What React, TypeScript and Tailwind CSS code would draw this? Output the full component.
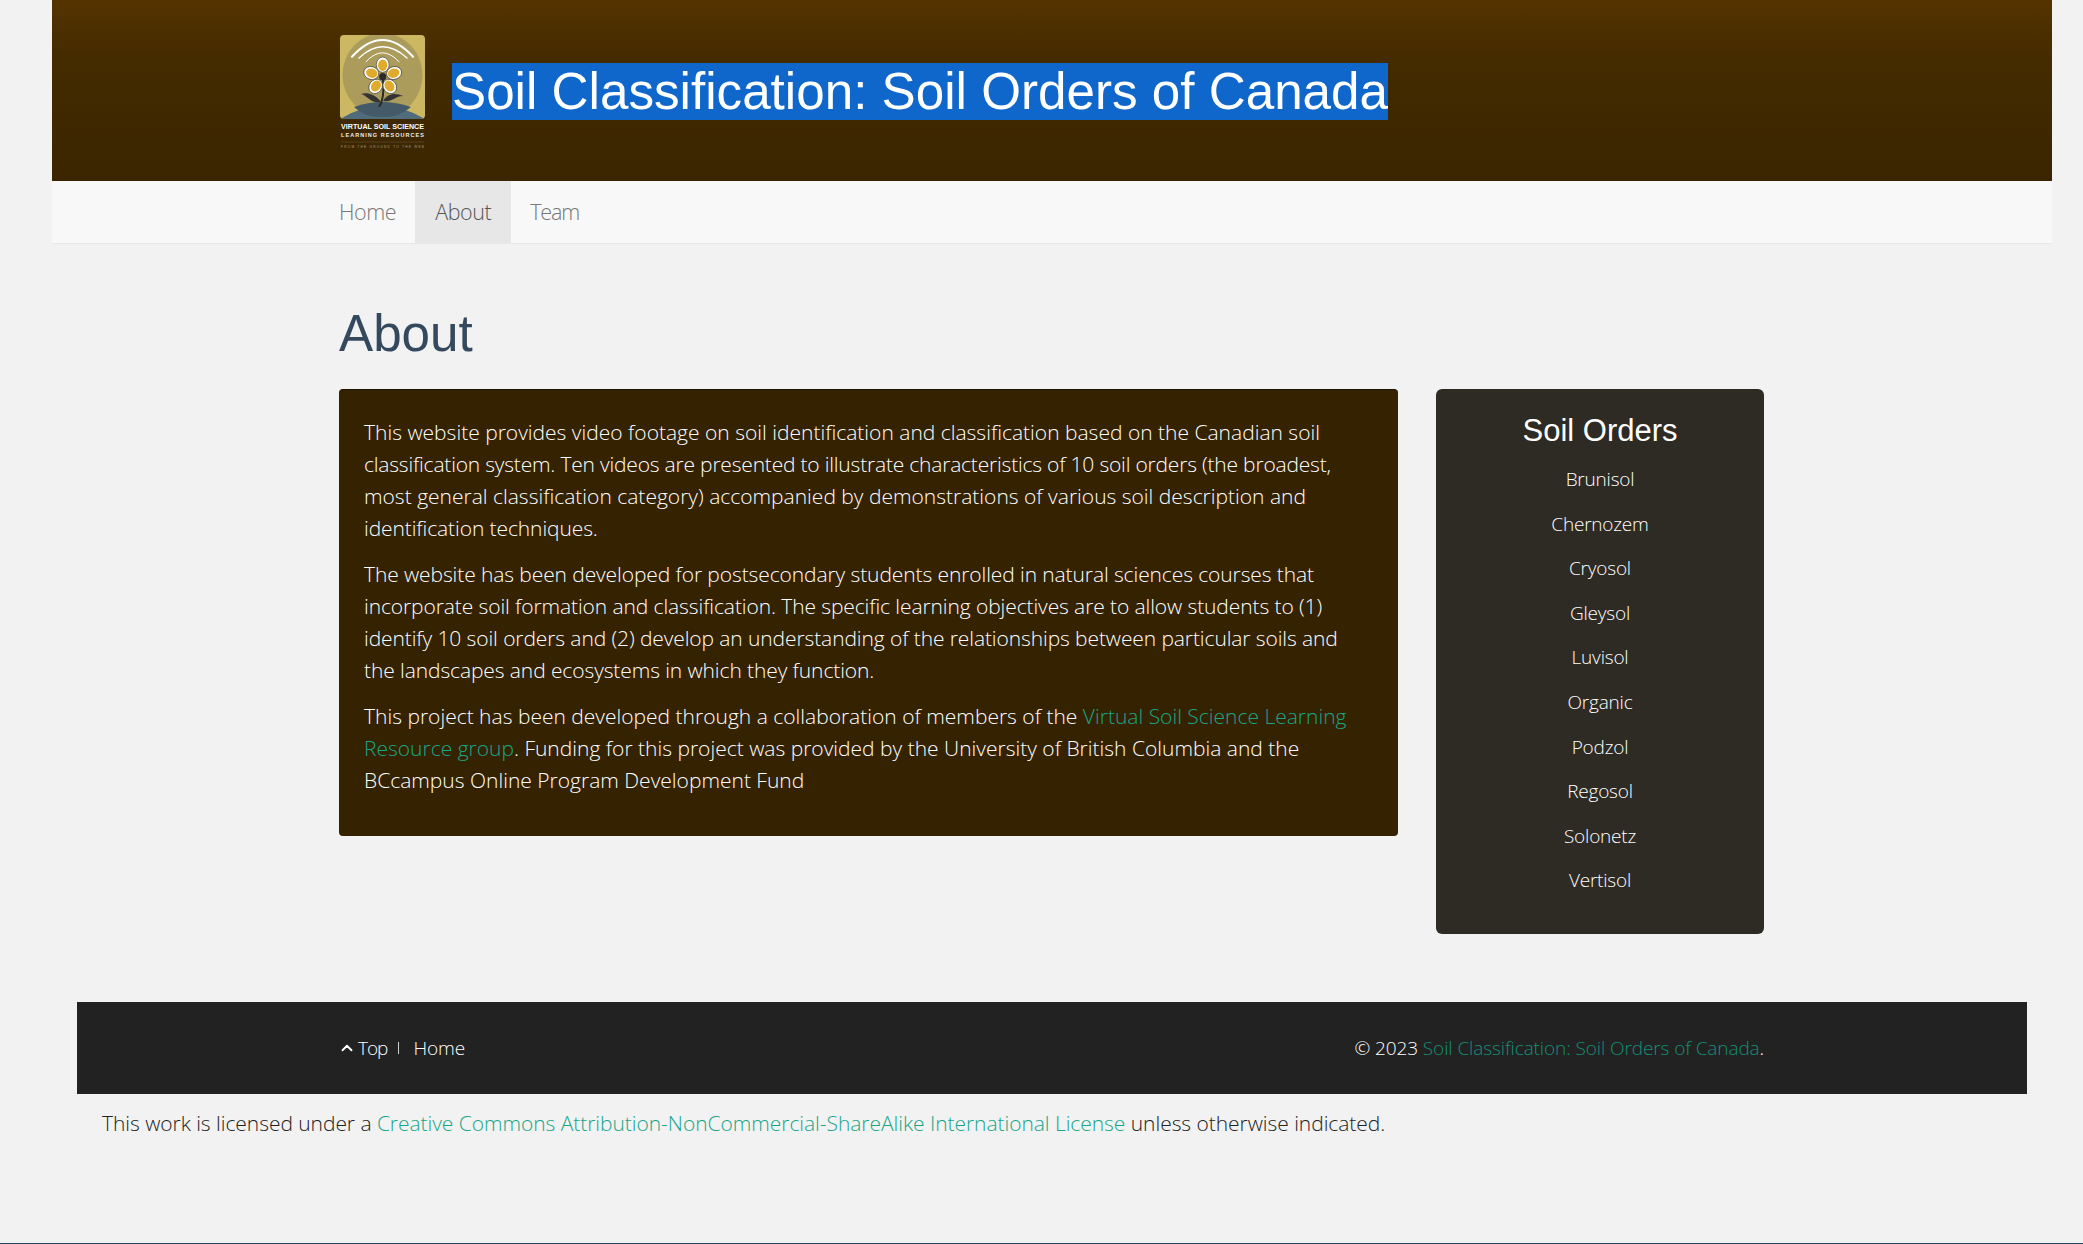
import { ChevronUp } from 'lucide-react';

const soilOrders = [
  'Brunisol',
  'Chernozem',
  'Cryosol',
  'Gleysol',
  'Luvisol',
  'Organic',
  'Podzol',
  'Regosol',
  'Solonetz',
  'Vertisol',
];

function Logo() {
  const petals = [0, 72, 144, 216, 288];
  return (
    <svg width="86" height="114" viewBox="0 0 86 114" className="shrink-0 ml-[1px] overflow-visible">
      <defs>
        <clipPath id="badge">
          <rect x="0" y="0" width="85" height="84" rx="4" />
        </clipPath>
      </defs>
      <g clipPath="url(#badge)">
        <rect width="85" height="84" fill="#ccb862" />
        <ellipse cx="42.5" cy="40" rx="40" ry="42" fill="#ab9c5b" />
        <path d="M0 84 Q42 58 85 84 Z" fill="#4f6b7c" />
        <path d="M14 72 Q42 62 71 72 Q60 82 42 82 Q24 82 14 72 Z" fill="#445a68" />
      </g>
      <g fill="none" stroke="#fff" strokeLinecap="round">
        <path d="M12 21.7 Q42.5 -11.7 73 21.7" strokeWidth="2.2" />
        <path d="M19 23 Q42.5 0.4 67 23" strokeWidth="1.4" />
        <path d="M26 26.7 Q42.5 8.7 59 26.7" strokeWidth="1" />
      </g>
      <path d="M43 44 C44 55 44 65 39 72" stroke="#2b2b2b" strokeWidth="2" fill="none" />
      <path d="M41 67 C35 59 27 57 21 59 C28 61 31 69 41 67 Z" fill="#333" />
      <path d="M43 66 C47 59 55 57 63 61 C55 61 51 68 43 66 Z" fill="#333" />
      {petals.map((angle) => (
        <g key={angle} transform={`rotate(${angle} 42.7 41.7)`}>
          <ellipse cx="42.7" cy="29.7" rx="6.4" ry="7.6" fill="#fff" stroke="#2a2a2a" strokeWidth="0.6" />
          <ellipse cx="42.7" cy="30.2" rx="4.6" ry="5.8" fill="#e0aa2c" />
        </g>
      ))}
      <circle cx="42.7" cy="41.7" r="3.6" fill="#2a2a2a" />
      <text x="42.5" y="94" textAnchor="middle" fill="#fff" fontSize="8" fontWeight="700" textLength="83" lengthAdjust="spacingAndGlyphs" fontFamily="'Liberation Sans', sans-serif">
        VIRTUAL SOIL SCIENCE
      </text>
      <text x="42.5" y="102" textAnchor="middle" fill="#eee" fontSize="5.5" fontWeight="700" textLength="83" fontFamily="'Liberation Sans', sans-serif">
        LEARNING RESOURCES
      </text>
      <line x1="1" y1="107" x2="84" y2="107" stroke="#6b5a3a" strokeWidth="0.5" />
      <text x="42.5" y="112.5" textAnchor="middle" fill="#a89c80" fontSize="3.2" textLength="83" fontFamily="'Liberation Sans', sans-serif">
        FROM THE GROUND TO THE WEB
      </text>
    </svg>
  );
}

export default function App() {
  return (
    <div className="h-[1244px] overflow-hidden bg-[#f2f2f2] border-b border-[#1c4a63] font-['Open_Sans',sans-serif] font-light">
      <div className="ml-[52px] w-[2000px]">
        {/* Header */}
        <header className="h-[181px] bg-gradient-to-b from-[#553300] via-[#452c00] via-30% to-[#3a2500] pl-[287px] pt-[35px] flex items-start gap-[26px]">
          <Logo />
          <h1 className="mt-[27px] font-['Liberation_Sans',sans-serif] font-normal text-[51.2px] leading-[59px] whitespace-nowrap text-white">
            <span className="bg-[#0f67cc]">Soil Classification: Soil Orders of Canada</span>
          </h1>
        </header>

        {/* Navigation */}
        <nav className="h-[63px] bg-[#f8f8f8] border-b border-[#e7e7e7] pl-[287px] flex text-[21.5px] tracking-[-0.4px] text-[#777]">
          <a className="h-[62px] pr-[19px] flex items-center">Home</a>
          <a className="h-[62px] w-[96px] justify-center flex items-center bg-[#e7e7e7] text-[#555]">About</a>
          <a className="h-[62px] px-[19px] flex items-center tracking-[-1.2px]">Team</a>
        </nav>

        {/* Content */}
        <main className="pl-[287px] pt-[60px] w-[1712px]">
          <h2 className="font-['Liberation_Sans',sans-serif] font-normal text-[51.2px] leading-[60px] text-[#34495e]">About</h2>
          <div className="mt-[25px] flex items-start justify-between">
            <div className="w-[1059px] h-[447px] rounded bg-[#352200] border-t border-[#1c1200] px-[25px] pt-[26px] text-[21px] leading-[32px] text-white whitespace-nowrap">
              <p>
                This website provides video footage on soil identification and classification based on the Canadian soil<br />
                <span className="tracking-[-0.2px]">classification system. Ten videos are presented to illustrate characteristics of 10 soil orders (the broadest,</span><br />
                most general classification category) accompanied by demonstrations of various soil description and<br />
                <span className="tracking-[-0.1px]">identification techniques.</span>
              </p>
              <p className="mt-[14px] tracking-[-0.1px]">
                The website has been developed for postsecondary students enrolled in natural sciences courses that<br />
                incorporate soil formation and classification. The specific learning objectives are to allow students to (1)<br />
                identify 10 soil orders and (2) develop an understanding of the relationships between particular soils and<br />
                the landscapes and ecosystems in which they function.
              </p>
              <p className="mt-[14px]">
                This project has been developed through a collaboration of members of the{' '}
                <a className="text-[#18a689]">Virtual Soil Science Learning</a><br />
                <a className="text-[#18a689]">Resource group</a>. Funding for this project was provided by the University of British Columbia and the<br />
                BCcampus Online Program Development Fund
              </p>
            </div>

            <aside className="w-[328px] h-[545px] rounded-md bg-[#2e2a24] pt-[24px] text-center text-white">
              <h3 className="font-['Liberation_Sans',sans-serif] font-normal text-[31px] leading-[36px]">Soil Orders</h3>
              <ul className="mt-[8px] text-[19px] tracking-[-0.2px]">
                {soilOrders.map((name) => (
                  <li key={name} className="h-[44.6px] leading-[44.6px]">{name}</li>
                ))}
              </ul>
            </aside>
          </div>
        </main>

        {/* Footer */}
        <footer className="mt-[68px] ml-[25px] w-[1950px] h-[92px] bg-[#222] pl-[261px] pr-[263px] flex items-center justify-between text-[19px] tracking-[-0.1px] text-white">
          <div className="flex items-center">
            <ChevronUp size={18} strokeWidth={2.5} />
            <span className="ml-[2px] tracking-[-1px]">Top</span>
            <span className="ml-[11px] mr-[14px] h-[12px] w-px bg-white/80" />
            <span>Home</span>
          </div>
          <div>
            © 2023 <a className="text-[#148f77]">Soil Classification: Soil Orders of Canada</a>.
          </div>
        </footer>

        <p className="ml-[50px] mt-[13px] text-[21px] leading-[32px] tracking-[-0.05px] text-[#222]">
          This work is licensed under a{' '}
          <a className="text-[#18a689]">Creative Commons Attribution-NonCommercial-ShareAlike International License</a>{' '}
          unless otherwise indicated.
        </p>
      </div>
    </div>
  );
}
